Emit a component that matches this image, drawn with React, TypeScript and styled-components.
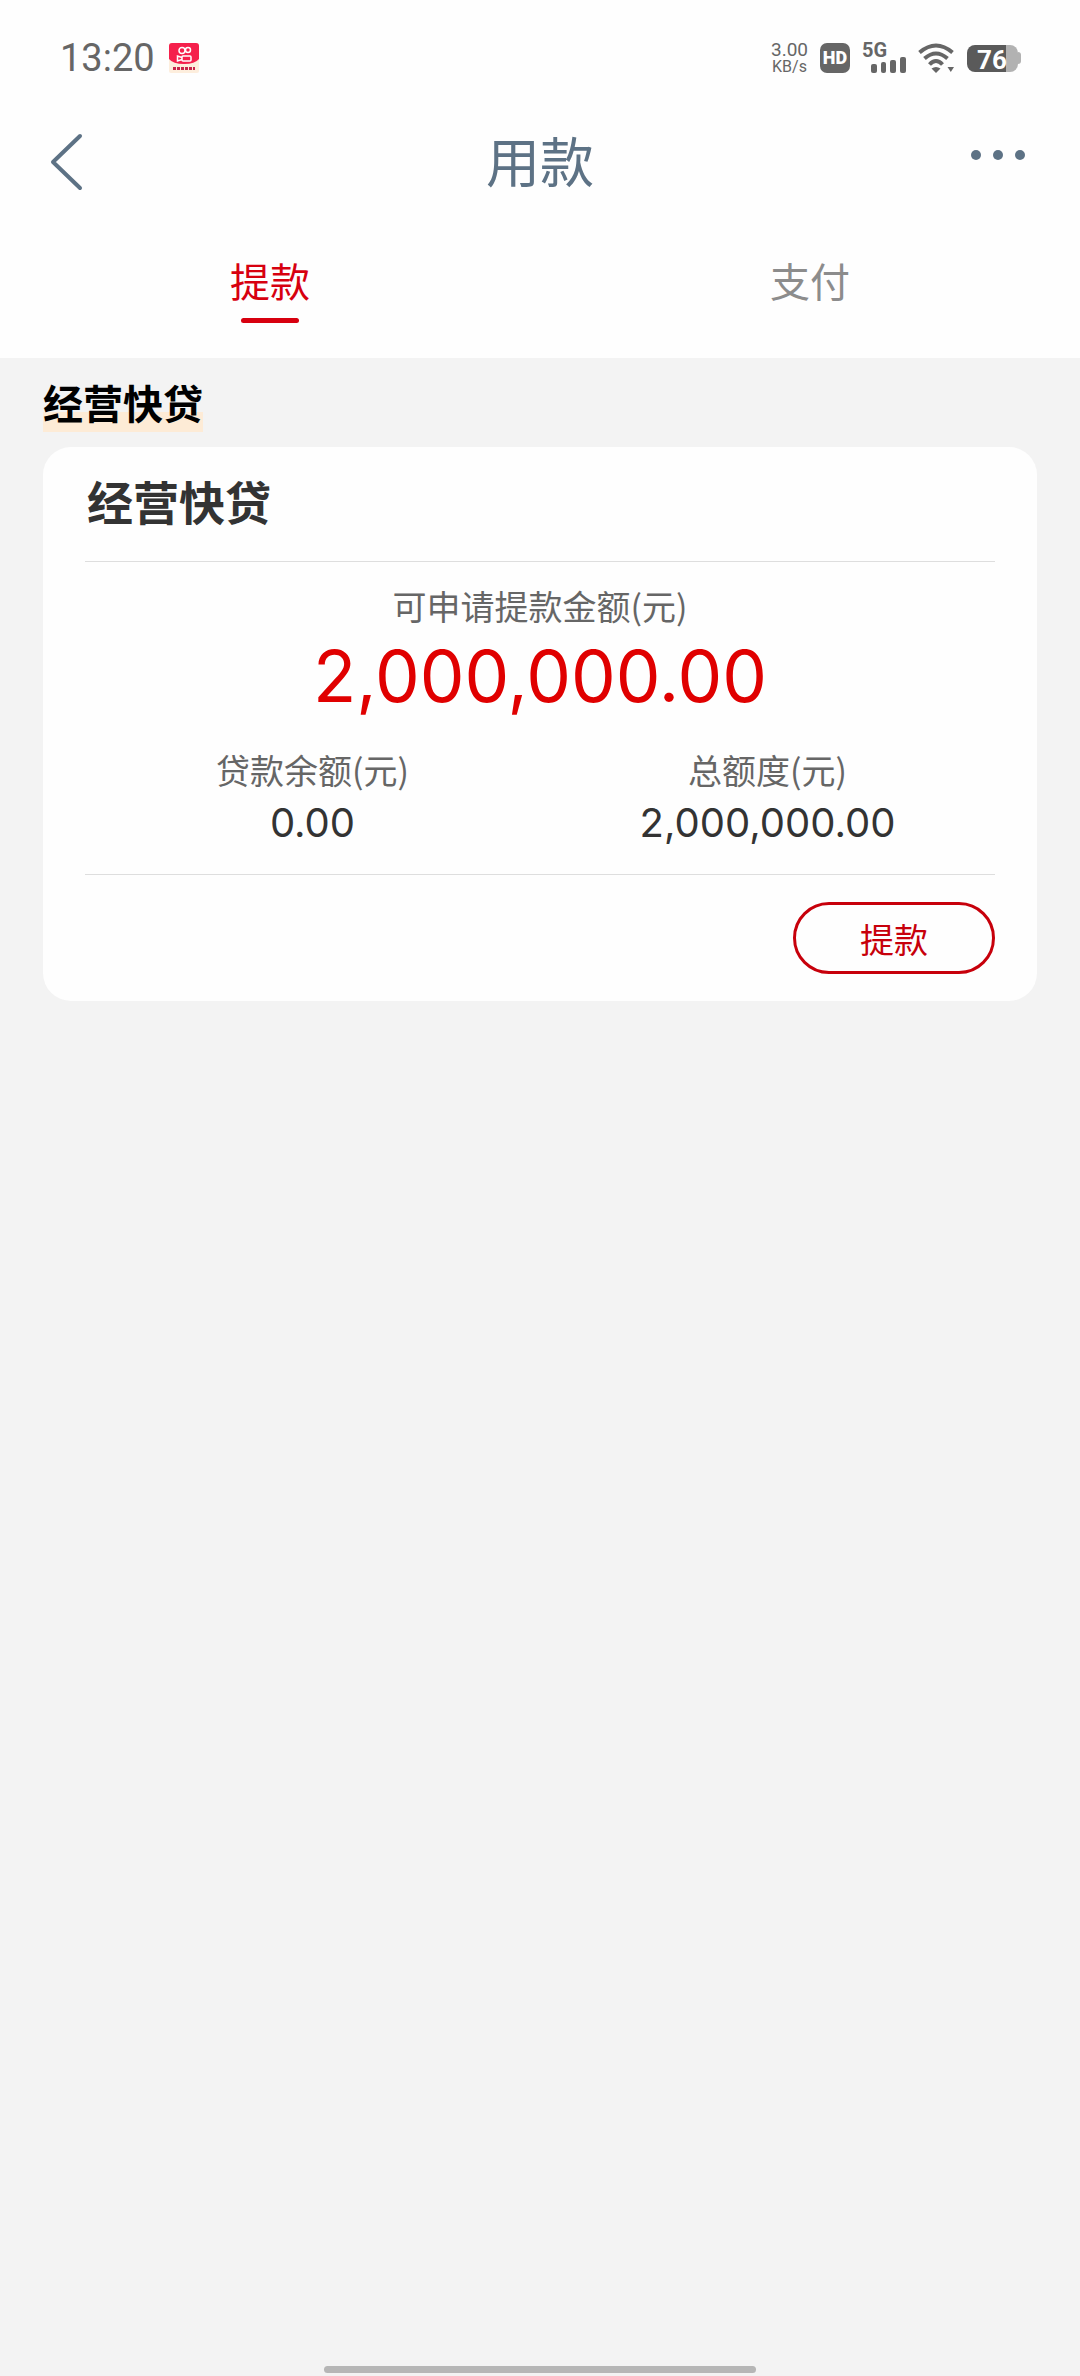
import React from "react";
import styled, { createGlobalStyle } from "styled-components";

const GlobalStyle = createGlobalStyle`
  * { box-sizing: border-box; }
  body { margin: 0; background: #f3f3f3; }
  h1, h2, h3, p, dl, dd { margin: 0; font-weight: 400; }
  button { font: inherit; background: none; border: 0; padding: 0; cursor: pointer; }
`;

const Page = styled.div`
  min-height: 100vh;
  display: flex;
  flex-direction: column;
  background: #f3f3f3;
  color: #333;
  font-family: "Noto Sans CJK SC", sans-serif;
`;

const Header = styled.header`
  background: #fefefe;
`;

const StatusBar = styled.div`
  height: 116px;
  padding: 0 59px 0 60px;
  display: flex;
  align-items: center;
  justify-content: space-between;
  color: #666;
  font-family: Roboto, sans-serif;
`;

const StatusGroup = styled.div<{ $gap: number }>`
  display: flex;
  align-items: center;
  gap: ${(p) => p.$gap}px;
`;

const Clock = styled.time`
  font-size: 38px;
  line-height: 40px;
`;

const Speed = styled.div`
  display: flex;
  flex-direction: column;
  text-align: center;
  font-size: 19px;
  line-height: 17px;

  small {
    font-size: 16px;
  }
`;

const HdBadge = styled.span`
  width: 30px;
  height: 30px;
  border-radius: 7px;
  background: #666;
  color: #fff;
  font-size: 18px;
  font-weight: 900;
  line-height: 30px;
  text-align: center;
`;

const Signal = styled.div`
  width: 44px;
  height: 30px;
  display: flex;
  flex-direction: column;
  font-size: 20px;
  font-weight: 700;
  line-height: 14px;

  svg {
    align-self: flex-end;
  }
`;

const Battery = styled.div`
  display: flex;
  align-items: center;

  &::after {
    content: "";
    width: 3px;
    height: 12px;
    border-radius: 0 3px 3px 0;
    background: #b2b2b2;
  }
`;

const BatteryBody = styled.span`
  width: 51px;
  height: 27px;
  padding-left: 10px;
  border-radius: 8px;
  background: linear-gradient(to right, #5a5a5a 39px, #b2b2b2 39px);
  color: #fff;
  font-size: 26px;
  font-weight: 700;
  line-height: 30px;
`;

const NavBar = styled.nav`
  height: 92px;
  padding: 0 48px;
  display: grid;
  grid-template-columns: 1fr auto 1fr;
  align-items: center;
  color: #5d7285;
`;

const IconButton = styled.button<{ $end?: boolean }>`
  justify-self: ${(p) => (p.$end ? "end" : "start")};
  display: flex;
  color: inherit;
`;

const Title = styled.h1`
  padding-bottom: 4px;
  font-size: 54px;
  line-height: 80px;
`;

const Tabs = styled.div`
  height: 150px;
  padding-top: 44px;
  display: grid;
  grid-template-columns: 1fr 1fr;
  align-items: start;
`;

const Tab = styled.button<{ $active?: boolean }>`
  display: flex;
  flex-direction: column;
  align-items: center;
  gap: 10px;
  color: ${(p) => (p.$active ? "#d7000f" : "#8c8c8c")};
  font-size: 40px;
  line-height: 56px;

  &::after {
    content: "";
    width: 58px;
    height: 5px;
    border-radius: 3px;
    background: ${(p) => (p.$active ? "#d7000f" : "transparent")};
  }
`;

const Content = styled.main`
  flex: 1;
  padding: 18px 43px;
`;

const SectionTitle = styled.h2`
  width: fit-content;
  margin-bottom: 15px;
  padding-bottom: 4px;
  background: linear-gradient(to top, #fdebd6 20px, transparent 20px);
  color: #000;
  font-size: 40px;
  font-weight: 700;
  line-height: 52px;
`;

const Card = styled.article`
  padding: 0 42px;
  border-radius: 28px;
  background: #fefefe;
`;

const CardTitle = styled.h3`
  padding: 18px 2px 26px;
  border-bottom: 1px solid #dedede;
  font-size: 46px;
  font-weight: 700;
  line-height: 70px;
`;

const Available = styled.dl`
  padding-top: 20px;
  text-align: center;
`;

const Label = styled.dt`
  color: #666;
  font-size: 34px;
  line-height: 48px;
`;

const Amount = styled.dd`
  color: #e00000;
  font-family: Inter, sans-serif;
  font-size: 71px;
  line-height: 92px;
`;

const Stats = styled.dl`
  padding: 24px 0 22px;
  display: grid;
  grid-template-columns: 1fr 1fr;
  border-bottom: 1px solid #dedede;
  text-align: center;
`;

const Value = styled.dd`
  font-family: Inter, sans-serif;
  font-size: 40px;
  line-height: 58px;
`;

const CardFooter = styled.footer`
  padding: 27px 0;
  display: flex;
  justify-content: flex-end;
`;

const OutlineButton = styled.button`
  && {
    width: 202px;
    height: 72px;
    border: 3px solid #c7000b;
    border-radius: 36px;
    color: #c7000b;
    font-size: 34px;
  }
`;

const HomeIndicator = styled.div`
  width: 40%;
  height: 7px;
  margin: 0 auto 3px;
  border-radius: 4px;
  background: #b6b6b6;
`;

const AppBadge = () => (
  <svg width="30" height="30" viewBox="0 0 30 30" aria-hidden="true">
    <rect width="30" height="30" rx="2" fill="#fdeedd" />
    <path d="M3 0h24a3 3 0 0 1 3 3v13q-4 5-15 5T0 16V3a3 3 0 0 1 3-3z" fill="#f5204c" />
    <g fill="none" stroke="#fff" strokeWidth="1.5">
      <circle cx="13" cy="7.500" r="3" />
      <circle cx="19" cy="7" r="2.500" />
      <rect x="13" y="13" width="9" height="5" rx="1" />
      <path d="M13 14.500 8.500 13v5l4.500-1.500" />
    </g>
    <path d="M4 25.500h22" stroke="#c8254a" strokeWidth="3" strokeDasharray="3 1" />
  </svg>
);

const Wifi = () => (
  <svg width="37" height="30" viewBox="0 0 37 30" aria-hidden="true">
    <g fill="none" stroke="#666" strokeWidth="4">
      <path d="M1.500 9.500Q18 -4.500 34.500 9.500" />
      <path d="M6.500 15.500Q18 5.500 29.500 15.500" />
      <path d="M11.500 21.500Q18 14.500 24.500 21.500" />
    </g>
    <path d="M13.500 25.500q4.500-3 9 0L18 30z" fill="#666" />
    <path d="M29.500 24h6.500l-3.200 5z" fill="#666" />
  </svg>
);

const App = () => (
  <Page>
    <GlobalStyle />
    <Header>
      <StatusBar>
        <StatusGroup $gap={14}>
          <Clock>13:20</Clock>
          <AppBadge />
        </StatusGroup>
        <StatusGroup $gap={12}>
          <Speed>
            <span>3.00</span>
            <small>KB/s</small>
          </Speed>
          <HdBadge>HD</HdBadge>
          <Signal>
            <span>5G</span>
            <svg width="35" height="16" viewBox="0 0 35 16" fill="#666" aria-hidden="true">
              <rect y="7" width="6" height="9" rx="2" />
              <rect x="10" y="5" width="5" height="11" rx="2" />
              <rect x="19" y="3" width="6" height="13" rx="2" />
              <rect x="29" width="6" height="16" rx="2" />
            </svg>
          </Signal>
          <Wifi />
          <Battery>
            <BatteryBody>76</BatteryBody>
          </Battery>
        </StatusGroup>
      </StatusBar>
      <NavBar>
        <IconButton type="button" aria-label="返回">
          <svg width="36" height="60" viewBox="0 0 36 60" fill="none" stroke="currentColor" strokeWidth="4" strokeLinecap="round" strokeLinejoin="round">
            <path d="M32 4 5 30l27 26" />
          </svg>
        </IconButton>
        <Title>用款</Title>
        <IconButton type="button" aria-label="更多" $end>
          <svg width="62" height="24" viewBox="0 0 62 24" fill="currentColor">
            <circle cx="6" cy="5" r="5" />
            <circle cx="28" cy="5" r="5" />
            <circle cx="50" cy="5" r="5" />
          </svg>
        </IconButton>
      </NavBar>
      <Tabs role="tablist">
        <Tab type="button" role="tab" aria-selected="true" $active>提款</Tab>
        <Tab type="button" role="tab" aria-selected="false">支付</Tab>
      </Tabs>
    </Header>
    <Content>
      <SectionTitle>经营快贷</SectionTitle>
      <Card>
        <CardTitle>经营快贷</CardTitle>
        <Available>
          <Label>可申请提款金额(元)</Label>
          <Amount>2,000,000.00</Amount>
        </Available>
        <Stats>
          <div>
            <Label>贷款余额(元)</Label>
            <Value>0.00</Value>
          </div>
          <div>
            <Label>总额度(元)</Label>
            <Value>2,000,000.00</Value>
          </div>
        </Stats>
        <CardFooter>
          <OutlineButton type="button">提款</OutlineButton>
        </CardFooter>
      </Card>
    </Content>
    <HomeIndicator />
  </Page>
);

export default App;
